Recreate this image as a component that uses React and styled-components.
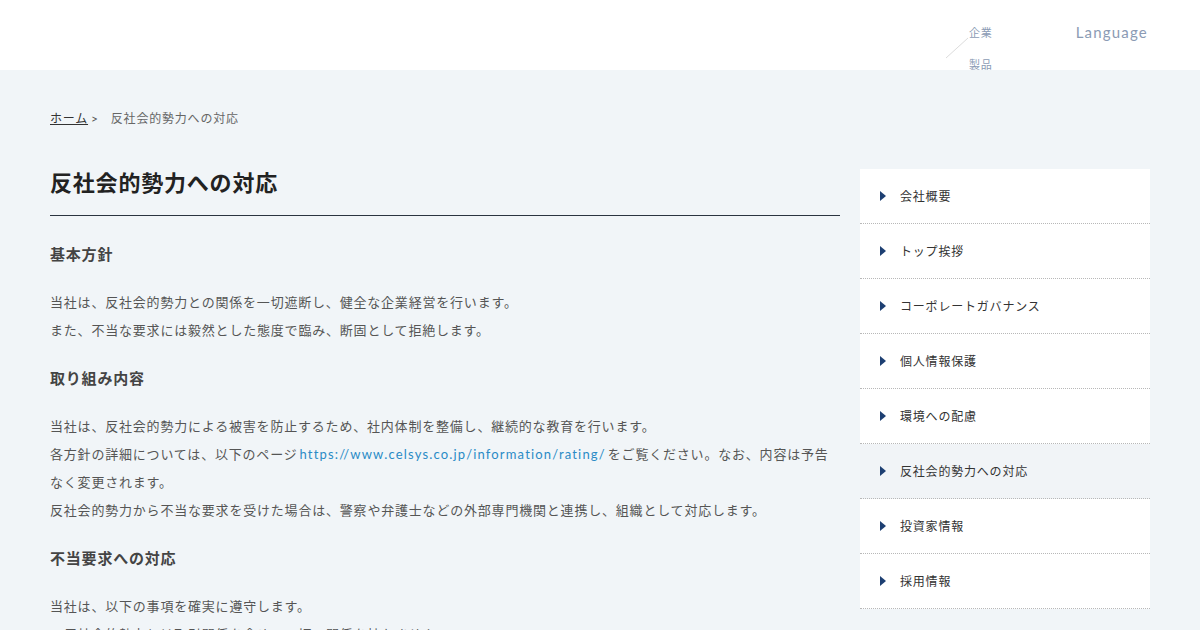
import React from "react";
import styled, { createGlobalStyle } from "styled-components";

const GlobalStyle = createGlobalStyle`
  html, body {
    margin: 0;
    padding: 0;
    background: #f1f5f8;
  }
  body {
    font-family: Lato, "Noto Sans CJK JP", sans-serif;
    color: #555;
    letter-spacing: 0.05em;
  }
`;

const Header = styled.header`
  height: 70px;
  background: #fff;
  display: flex;
  justify-content: flex-end;
  align-items: flex-start;
  padding-right: 52px;
`;

const Slash = styled.svg`
  margin-top: 36px;
  flex-shrink: 0;
`;

const NavLabels = styled.div`
  display: flex;
  flex-direction: column;
  gap: 12px;
  margin-top: 23px;
`;

const NavLabel = styled.span`
  font-size: 11px;
  line-height: 20px;
  color: #8b9bb4;
`;

const Language = styled.span`
  margin-top: 22px;
  margin-left: 83px;
  font-size: 15px;
  line-height: 20px;
  letter-spacing: 0.08em;
  color: #8b9bb4;
`;

const Page = styled.div`
  width: 1100px;
  margin: 0 auto;
  padding-top: 39px;
`;

const Breadcrumb = styled.nav`
  font-size: 12px;
  line-height: 20px;
  color: #666;
  margin-bottom: 40px;
  display: flex;
  gap: 12px;
`;

const CrumbLink = styled.a`
  color: #333;
  text-decoration: underline;
  &::after {
    content: ">";
    text-decoration: none;
    display: inline-block;
    margin-left: 3px;
    color: #555;
  }
`;

const Columns = styled.div`
  display: flex;
  gap: 20px;
  align-items: flex-start;
`;

const Main = styled.main`
  width: 790px;
  flex-shrink: 0;
`;

const Title = styled.h1`
  margin: 0 0 24px;
  font-size: 22px;
  line-height: 28px;
  font-weight: 700;
  color: #222;
  padding-bottom: 18px;
  border-bottom: 1px solid #2b3440;
`;

const Heading = styled.h2`
  margin: 0 0 20px;
  font-size: 15px;
  line-height: 28px;
  font-weight: 700;
  color: #444;
`;

const Para = styled.p`
  margin: 0 0 20px;
  font-size: 13px;
  line-height: 28px;
  color: #555;
`;

const Link = styled.a`
  color: #2a8bc6;
  text-decoration: none;
  letter-spacing: 0.09em;
  margin: 0 2px;
`;

const Sidebar = styled.aside`
  width: 290px;
  display: flex;
  flex-direction: column;
`;

const SideItem = styled.a`
  display: flex;
  align-items: center;
  gap: 14px;
  padding-left: 20px;
  padding-bottom: 2px;
  box-sizing: border-box;
  height: 55px;
  background: ${(p) => (p.$active ? "#f1f4f7" : "#fff")};
  border-bottom: 1px dotted #b8b8b8;
  font-size: 12px;
  color: #333;
  text-decoration: none;

  &::before {
    content: "";
    width: 0;
    height: 0;
    margin-top: 2px;
    border-top: 5px solid transparent;
    border-bottom: 5px solid transparent;
    border-left: 6px solid #1d3f72;
  }
`;

const sideLinks = [
  "会社概要",
  "トップ挨拶",
  "コーポレートガバナンス",
  "個人情報保護",
  "環境への配慮",
  "反社会的勢力への対応",
  "投資家情報",
  "採用情報",
];

export default function App() {
  return (
    <>
      <GlobalStyle />
      <Header>
        <Slash width="25" height="24" viewBox="0 0 25 24">
          <line x1="2" y1="22" x2="24" y2="2" stroke="#dcdcdc" strokeWidth="1" />
        </Slash>
        <NavLabels>
          <NavLabel>企業</NavLabel>
          <NavLabel>製品</NavLabel>
        </NavLabels>
        <Language>Language</Language>
      </Header>
      <Page>
        <Breadcrumb>
          <CrumbLink href="#">ホーム</CrumbLink>
          <span>反社会的勢力への対応</span>
        </Breadcrumb>
        <Columns>
          <Main>
            <Title>反社会的勢力への対応</Title>
            <Heading>基本方針</Heading>
            <Para>
              当社は、反社会的勢力との関係を一切遮断し、健全な企業経営を行います。
              <br />
              また、不当な要求には毅然とした態度で臨み、断固として拒絶します。
            </Para>
            <Heading>取り組み内容</Heading>
            <Para>
              当社は、反社会的勢力による被害を防止するため、社内体制を整備し、継続的な教育を行います。
              <br />
              各方針の詳細については、以下のページ
              <Link href="#">https://www.celsys.co.jp/information/rating/</Link>
              をご覧ください。なお、内容は予告なく変更されます。
              <br />
              反社会的勢力から不当な要求を受けた場合は、警察や弁護士などの外部専門機関と連携し、組織として対応します。
            </Para>
            <Heading>不当要求への対応</Heading>
            <Para>
              当社は、以下の事項を確実に遵守します。
              <br />
              ・反社会的勢力とは取引関係を含め、一切の関係を持ちません。
            </Para>
          </Main>
          <Sidebar>
            {sideLinks.map((label, i) => (
              <SideItem key={label} href="#" $active={i === 5}>
                {label}
              </SideItem>
            ))}
          </Sidebar>
        </Columns>
      </Page>
    </>
  );
}
